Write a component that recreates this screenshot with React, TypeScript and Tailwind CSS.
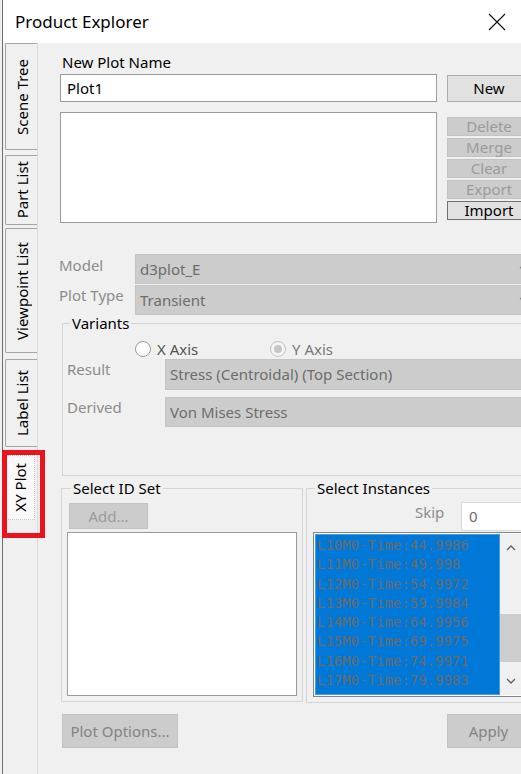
import React from 'react'

function Chevron({ up = false, color = '#8a8a8a' }: { up?: boolean; color?: string }) {
    return (
        <svg width="10" height="6" viewBox="0 0 10 6" className="shrink-0">
            <path
                d={up ? 'M1 5L5 1L9 5' : 'M1 1L5 5L9 1'}
                fill="none"
                stroke={color}
                strokeWidth="1.3"
            />
        </svg>
    )
}

function Combo({ value, h = 'h-[30px]' }: { value: string; h?: string }) {
    return (
        <div
            className={`flex ${h} w-[399px] shrink-0 items-center justify-between border border-[#c4c4c4] bg-[#cccccc] pl-[4px] pr-[4px] text-[#6d6d6d]`}
        >
            <span>{value}</span>
            <Chevron />
        </div>
    )
}

function Radio({ checked = false, disabled = false }: { checked?: boolean; disabled?: boolean }) {
    return (
        <span
            className={`flex h-[16px] w-[16px] shrink-0 items-center justify-center rounded-full border ${
                disabled ? 'border-[#c2c2c2] bg-[#f4f4f4]' : 'border-[#9a9a9a] bg-white'
            }`}
        >
            {checked && <span className="h-[8px] w-[8px] rounded-full bg-[#c6c6c6]" />}
        </span>
    )
}

const tabs = [
    { label: 'Scene Tree', cls: 'h-[107px]' },
    { label: 'Part List', cls: 'mt-[5px] h-[70px]' },
    { label: 'Viewpoint List', cls: 'mt-[3px] h-[125px]' },
    { label: 'Label List', cls: 'mt-[6px] h-[88px]' },
]

const instances = [
    'L10M0-Time:44.9986',
    'L11M0-Time:49.998',
    'L12M0-Time:54.9972',
    'L13M0-Time:59.9984',
    'L14M0-Time:64.9956',
    'L15M0-Time:69.9975',
    'L16M0-Time:74.9971',
    'L17M0-Time:79.9983',
]

function SideTabs() {
    return (
        <div className="flex w-[34px] shrink-0 flex-col pl-[2px]">
            {tabs.map((t) => (
                <div
                    key={t.label}
                    className={`flex w-[32px] items-center justify-center rounded-l-[2px] border border-r-0 border-[#a5a5a5] bg-[#f0f0f0] ${t.cls}`}
                >
                    <span className="rotate-180 whitespace-nowrap leading-[18px] [writing-mode:vertical-rl]">
                        {t.label}
                    </span>
                </div>
            ))}
            <div className="mt-[8px] flex h-[65px] w-[30px] items-center justify-center border border-dotted border-[#c8c8c8] bg-[#f9f9f9]">
                <span className="rotate-180 whitespace-nowrap leading-[18px] [writing-mode:vertical-rl]">
                    XY Plot
                </span>
            </div>
        </div>
    )
}

function DisabledButton({ label, cls }: { label: string; cls: string }) {
    return (
        <div
            className={`flex shrink-0 items-center justify-center border border-[#c2c2c2] bg-[#cccccc] text-[#9b9b9b] ${cls}`}
        >
            {label}
        </div>
    )
}

export default function App() {
    return (
        <div className="relative h-[774px] w-[521px] overflow-hidden bg-[#f0f0f0] pl-[2px] font-['Noto_Sans',sans-serif] text-[15px] text-black">
            <div className="flex h-full flex-col border-l border-[#6e6e6e]">
                <header className="flex h-[43px] shrink-0 items-center justify-between bg-white pl-[12px] pr-[15px]">
                    <span className="text-[17px] leading-[20px]">Product Explorer</span>
                    <svg width="18" height="18" viewBox="0 0 18 18">
                        <path d="M1 1L17 17M17 1L1 17" stroke="#111" strokeWidth="1.1" />
                    </svg>
                </header>

                <div className="flex flex-1">
                    <SideTabs />

                    <div className="min-w-0 flex-1 border-l border-[#dadada] pl-[22px] pt-[9px]">
                        <div className="ml-[2px] leading-[20px]">New Plot Name</div>
                        <div className="mt-[2px] flex items-start">
                            <div className="flex h-[28px] w-[377px] shrink-0 items-center border border-[#9a9a9a] bg-white pl-[6px]">
                                Plot1
                            </div>
                            <div className="ml-[10px] mt-[1px] flex h-[27px] w-[84px] shrink-0 items-center justify-center border border-[#adadad] bg-[#e1e1e1]">
                                New
                            </div>
                        </div>

                        <div className="mt-[10px] flex items-start">
                            <div className="h-[111px] w-[377px] shrink-0 border border-[#9a9a9a] bg-white" />
                            <div className="ml-[10px] mt-[5px] flex w-[84px] shrink-0 flex-col gap-[2px] leading-[17px]">
                                <DisabledButton label="Delete" cls="h-[19px]" />
                                <DisabledButton label="Merge" cls="h-[19px]" />
                                <DisabledButton label="Clear" cls="h-[19px]" />
                                <DisabledButton label="Export" cls="h-[19px]" />
                                <div className="flex h-[19px] items-center justify-center border border-[#707070] bg-[#e1e1e1]">
                                    Import
                                </div>
                            </div>
                        </div>

                        <div className="mt-[31px] flex flex-col gap-[1px]">
                            <div className="flex items-start">
                                <div className="-ml-[1px] mt-[1px] w-[76px] shrink-0 leading-[20px] text-[#8c8c8c]">
                                    Model
                                </div>
                                <Combo value="d3plot_E" />
                            </div>
                            <div className="flex items-start">
                                <div className="-ml-[1px] w-[76px] shrink-0 leading-[20px] text-[#8c8c8c]">
                                    Plot Type
                                </div>
                                <Combo value="Transient" />
                            </div>
                        </div>

                        <fieldset className="ml-[2px] w-[480px] border border-[#d5d5d5] pb-[48px]">
                            <legend className="ml-[7px] px-[2px] leading-[16px]">Variants</legend>
                            <div className="mt-[10px] flex h-[16px] items-center pl-[72px]">
                                <div className="flex w-[135px] items-center gap-[6px] text-[#555555]">
                                    <Radio />
                                    <span className="leading-[20px]">X Axis</span>
                                </div>
                                <div className="flex items-center gap-[6px] text-[#777777]">
                                    <Radio checked disabled />
                                    <span className="leading-[20px]">Y Axis</span>
                                </div>
                            </div>
                            <div className="mt-[2px] flex items-start pl-[4px]">
                                <div className="w-[98px] shrink-0 leading-[20px] text-[#8c8c8c]">Result</div>
                                <Combo value="Stress (Centroidal) (Top Section)" h="h-[31px]" />
                            </div>
                            <div className="mt-[7px] flex items-start pl-[4px]">
                                <div className="w-[98px] shrink-0 leading-[20px] text-[#8c8c8c]">Derived</div>
                                <Combo value="Von Mises Stress" />
                            </div>
                        </fieldset>

                        <div className="mt-[4px] flex items-start">
                            <fieldset className="ml-[1px] w-[242px] shrink-0 border border-[#d5d5d5] pb-[5px]">
                                <legend className="ml-[9px] px-[2px] leading-[16px]">Select ID Set</legend>
                                <DisabledButton label="Add..." cls="ml-[7px] mt-[7px] h-[26px] w-[79px]" />
                                <div className="ml-[5px] mt-[3px] h-[164px] w-[230px] border border-[#9a9a9a] bg-white" />
                            </fieldset>

                            <fieldset className="ml-[3px] w-[240px] shrink-0 border border-[#d5d5d5] pb-[5px]">
                                <legend className="ml-[8px] px-[2px] leading-[16px]">Select Instances</legend>
                                <div className="mt-[6px] flex items-start">
                                    <div className="ml-[108px] w-[46px] shrink-0 leading-[20px] text-[#8c8c8c]">
                                        Skip
                                    </div>
                                    <div className="flex h-[29px] w-[80px] shrink-0 items-center border border-[#dadada] bg-white pl-[7px] text-[#6d6d6d]">
                                        0
                                    </div>
                                </div>
                                <div className="ml-[6px] mt-[1px] flex h-[165px] w-[210px] border border-[#828790] bg-white p-[1px]">
                                    <div className="h-full w-[185px] shrink-0 border border-[#4a9be2] bg-[#0078d7] pl-[1px] pt-[1px] font-['DejaVu_Sans_Mono',monospace] text-[14px] leading-[19.3px] text-[#6b6b6b]">
                                        {instances.map((i) => (
                                            <div key={i} className="whitespace-nowrap">
                                                {i}
                                            </div>
                                        ))}
                                    </div>
                                    <div className="flex flex-1 flex-col bg-[#f0f0f0]">
                                        <div className="flex h-[28px] items-center justify-center">
                                            <Chevron up color="#606060" />
                                        </div>
                                        <div className="h-[52px]" />
                                        <div className="h-[48px] bg-[#cdcdcd]" />
                                        <div className="flex-1" />
                                        <div className="flex h-[28px] items-center justify-center">
                                            <Chevron color="#606060" />
                                        </div>
                                    </div>
                                </div>
                            </fieldset>
                        </div>

                        <div className="mt-[11px] flex">
                            <DisabledButton label="Plot Options..." cls="ml-[2px] h-[34px] w-[116px] text-[#838383]" />
                            <DisabledButton label="Apply" cls="ml-[269px] h-[34px] w-[83px] text-[#838383]" />
                        </div>
                    </div>
                </div>
            </div>
            <div className="pointer-events-none absolute left-[2px] top-[450px] h-[88px] w-[43px] border-[5px] border-[#e8131c]" />
        </div>
    )
}
